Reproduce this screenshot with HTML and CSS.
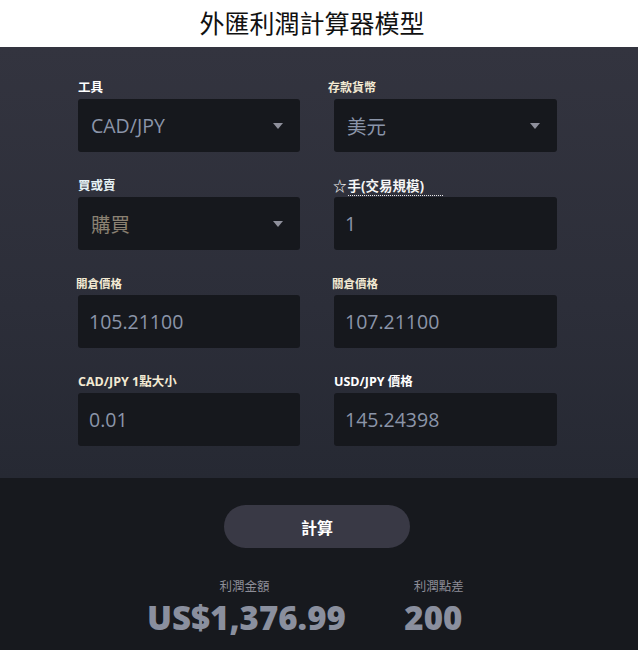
FILE: index.html
```html
<!DOCTYPE html>
<html lang="zh-Hant">
<head>
<meta charset="utf-8">
<title>外匯利潤計算器模型</title>
<link rel="stylesheet" href="styles.css">
</head>
<body>
<header class="title-bar">
  <h1 class="title">外匯利潤計算器模型</h1>
</header>
<main class="panel">
  <div class="form-grid">
    <div class="field">
      <div class="label label-white">工具</div>
      <div class="control select"><span class="value">CAD/JPY</span><span class="caret"></span></div>
    </div>
    <div class="field">
      <div class="label label-cream label-small label-shift">存款貨幣</div>
      <div class="control select"><span class="value">美元</span><span class="caret"></span></div>
    </div>
    <div class="field">
      <div class="label label-blue">買或賣</div>
      <div class="control select"><span class="value value-brown">購買</span><span class="caret"></span></div>
    </div>
    <div class="field">
      <div class="label label-white label-lots">☆<span class="dotted">手(交易規模)</span></div>
      <div class="control"><span class="value">1</span></div>
    </div>
    <div class="field">
      <div class="label label-cream label-small">開倉價格</div>
      <div class="control"><span class="value">105.21100</span></div>
    </div>
    <div class="field">
      <div class="label label-cream label-small">關倉價格</div>
      <div class="control"><span class="value">107.21100</span></div>
    </div>
    <div class="field">
      <div class="label label-cream">CAD/JPY 1點大小</div>
      <div class="control"><span class="value">0.01</span></div>
    </div>
    <div class="field">
      <div class="label label-white">USD/JPY 價格</div>
      <div class="control"><span class="value">145.24398</span></div>
    </div>
  </div>
</main>
<section class="results">
  <button class="calc-btn">計算</button>
  <div class="result-row">
    <div class="result result-amount">
      <div class="result-label">利潤金額</div>
      <div class="result-value">US$1,376.99</div>
    </div>
    <div class="result result-pips">
      <div class="result-label">利潤點差</div>
      <div class="result-value">200</div>
    </div>
  </div>
</section>
</body>
</html>
```
FILE: styles.css
```css
* { box-sizing: border-box; }
html, body { margin: 0; padding: 0; }
body {
  width: 638px;
  height: 650px;
  overflow: hidden;
  background: #17191e;
  font-family: "Open Sans", "Noto Sans CJK TC", sans-serif;
}
.title-bar {
  height: 47px;
  background: #ffffff;
  display: flex;
  align-items: center;
  justify-content: center;
}
.title {
  margin: 0;
  font-family: "Noto Sans CJK TC", sans-serif;
  font-weight: 400;
  font-size: 25px;
  line-height: 1;
  color: #111111;
  transform: translateX(-7px);
  padding-bottom: 3px;
}
.panel {
  background: linear-gradient(180deg, #33343f 0%, #2c2e39 60%, #262933 100%);
  padding: 33px 0 0 78px;
  height: 431px;
}
.form-grid {
  display: grid;
  grid-template-columns: 222px 223px;
  column-gap: 34px;
  row-gap: 26px;
}
.field { display: flex; flex-direction: column; }
.label {
  height: 16px;
  line-height: 16px;
  margin-bottom: 3px;
  font-size: 12.5px;
  font-weight: 700;
  white-space: nowrap;
  font-family: "Open Sans", "Noto Sans CJK TC", sans-serif;
}
.label-small { font-size: 11.5px; margin-left: -2px; }
.label-shift { margin-left: -6px; font-size: 12px; }
.label-white { color: #ffffff; }
.label-cream { color: #f3ead3; }
.label-blue { color: #e6f2f6; }
.label-lots { font-weight: 500; font-size: 13.5px; color: #f4f4f4; margin-left: -1px; }
.dotted {
  border-bottom: 1px dotted #e8e8e8;
  padding-right: 19px;
  margin-left: 1px;
  font-weight: 700;
}
.control {
  height: 53px;
  background: #16181d;
  border-radius: 3px;
  display: flex;
  align-items: center;
  padding: 0 17px 0 11px;
}
.value {
  flex: 1;
  font-size: 19.5px;
  color: #8b95a9;
  font-family: "Open Sans", "Noto Sans CJK TC", sans-serif;
}
.select .value { padding-left: 2px; }
.value-brown { color: #8a8172; }
.caret {
  width: 0;
  height: 0;
  border-left: 5.5px solid transparent;
  border-right: 5.5px solid transparent;
  border-top: 6px solid #8f909c;
}
.results {
  display: flex;
  flex-direction: column;
  align-items: center;
  padding-top: 27px;
}
.calc-btn {
  width: 186px;
  height: 43px;
  border: none;
  border-radius: 22px;
  background: #393945;
  color: #ffffff;
  font-family: "Noto Sans CJK TC", sans-serif;
  font-weight: 700;
  font-size: 16px;
  margin-left: -4px;
}
.result-row {
  align-self: stretch;
  display: flex;
  padding-left: 147px;
  gap: 57px;
  margin-top: 30px;
}
.result { display: flex; flex-direction: column; align-items: center; }
.result-label {
  font-family: "Noto Sans CJK TC", sans-serif;
  font-size: 12.5px;
  line-height: 16px;
  color: #8d8d97;
  margin-bottom: 2px;
}
.result-amount .result-label { margin-right: 4px; }
.result-pips .result-label { margin-left: 11px; }
.result-value {
  font-family: "Open Sans", sans-serif;
  font-weight: 800;
  font-size: 33px;
  line-height: 44px;
  color: #8a8f9e;
}
```
